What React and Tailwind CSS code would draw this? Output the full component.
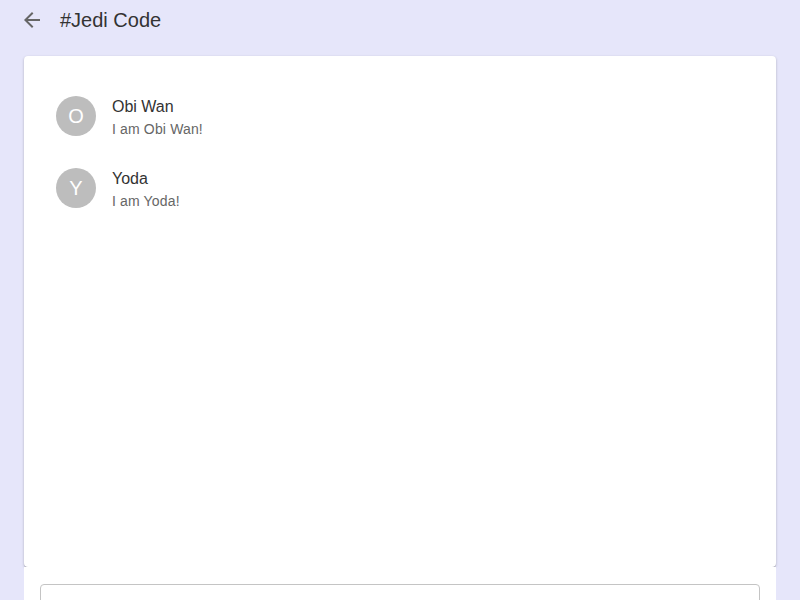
export default function App() {
  const items = [
    { l: "O", n: "Obi Wan", m: "I am Obi Wan!" },
    { l: "Y", n: "Yoda", m: "I am Yoda!" },
  ];
  return (
    <div className="h-[600px] overflow-hidden bg-[#e6e6fa] flex flex-col font-['Liberation_Sans',Arial,sans-serif]">
      <div className="h-14 shrink-0 flex items-center pl-5 pb-4">
        <svg width="24" height="24" viewBox="0 0 24 24" className="text-[#666]" fill="currentColor">
          <path d="M20 11H7.83l5.59-5.59L12 4l-8 8 8 8 1.41-1.41L7.83 13H20v-2z" />
        </svg>
        <span className="ml-4 text-[20px] text-[#333]">#Jedi Code</span>
      </div>
      <div className="mx-6 h-[511px] shrink-0 bg-white rounded shadow-[0_1px_3px_rgba(0,0,0,0.2),0_1px_1px_rgba(0,0,0,0.14),0_2px_1px_-1px_rgba(0,0,0,0.12)] pt-10 px-8 flex flex-col gap-8">
        {items.map((it) => (
          <div key={it.n} className="h-10 flex items-start gap-4">
            <div className="w-10 h-10 shrink-0 rounded-full bg-[#bdbdbd] text-white text-[20px] flex items-center justify-center">
              {it.l}
            </div>
            <div className="flex flex-col pt-px">
              <span className="text-[16px] leading-5 text-[#333]">{it.n}</span>
              <span className="mt-[2px] text-[14px] tracking-[0.15px] leading-5 text-[#666]">{it.m}</span>
            </div>
          </div>
        ))}
      </div>
      <div className="mx-6 flex-1 bg-white pt-[17px] px-4">
        <div className="h-14 border border-[#c4c4c4] rounded"></div>
      </div>
    </div>
  );
}
